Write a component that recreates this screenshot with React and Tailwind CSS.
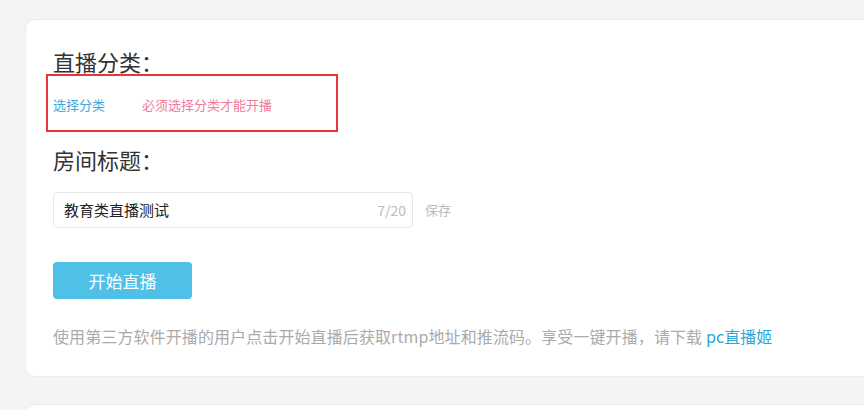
export default function App() {
  return (
    <div
      className="h-[410px] w-[864px] overflow-hidden bg-[#f4f4f6] pl-[25px] pt-[19px]"
      style={{ fontFamily: '"Microsoft YaHei", "Noto Sans CJK SC", "Liberation Sans", sans-serif' }}
    >
      {/* Main settings card */}
      <div className="h-[358px] w-[860px] rounded-[10px] border border-[#ececf0] bg-white pl-[27px] pt-[26px]">
        <h2 className="text-[22px] leading-[30px] text-[#333]">直播分类：</h2>

        {/* Category row (highlighted) */}
        <div className="ml-[-7px] mt-[-2px] flex h-[58px] w-[292px] items-center gap-[37px] border-2 border-[#e8343a] pl-[5px] pt-[3px]">
          <span className="text-[13px] text-[#3aa8dc]">选择分类</span>
          <span className="text-[13px] text-[#f27a9c]">必须选择分类才能开播</span>
        </div>

        <h2 className="mt-[12px] text-[22px] leading-[30px] text-[#333]">房间标题：</h2>

        {/* Title input */}
        <div className="mt-[18px] flex items-center gap-[12px]">
          <div className="flex h-[36px] w-[360px] items-center justify-between rounded-[4px] border border-[#e6e6e6] pl-[10px] pr-[6px]">
            <span className="text-[15px] text-[#222]">教育类直播测试</span>
            <span className="text-[14px] text-[#bbb]">7/20</span>
          </div>
          <span className="text-[13px] text-[#bbb]">保存</span>
        </div>

        <button className="mt-[34px] h-[37px] w-[139px] rounded-[4px] bg-[#4fc0e8] text-[17px] text-white">
          开始直播
        </button>

        <p className="mt-[25px] text-[16px] tracking-[0.1px] text-[#aaa]">
          使用第三方软件开播的用户点击开始直播后获取rtmp地址和推流码。享受一键开播，请下载{' '}
          <span className="text-[#2fa5d9]">pc直播姬</span>
        </p>
      </div>

      {/* Next card peeking in */}
      <div className="mt-[27px] h-[40px] w-[860px] rounded-[10px] border border-[#ececf0] bg-white" />
    </div>
  );
}
